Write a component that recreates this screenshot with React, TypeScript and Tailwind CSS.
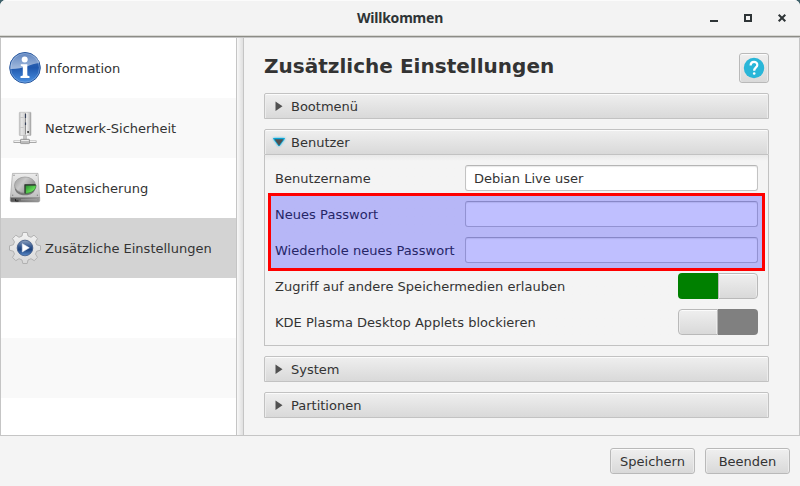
import React from "react";

const raised =
  "border border-[#c2c2c2] bg-gradient-to-b from-[#efefef] to-[#d9d9d9] shadow-[inset_0_1px_0_#fbfbfb,inset_1px_0_0_#ececec,inset_-1px_0_0_#ececec]";

const raisedButton =
  "border border-[#b9b9b9] bg-gradient-to-b from-[#efefef] to-[#d9d9d9] shadow-[inset_0_1px_0_#fbfbfb,inset_1px_0_0_#ececec,inset_-1px_0_0_#ececec]";

function InfoIcon() {
  return (
    <svg width="34" height="34" viewBox="0 0 34 34">
      <defs>
        <linearGradient id="info" x1="0" y1="0" x2="0" y2="1">
          <stop offset="0" stopColor="#3f6bb0" />
          <stop offset="0.5" stopColor="#2058ad" />
          <stop offset="1" stopColor="#4a90e2" />
        </linearGradient>
        <linearGradient id="gloss" x1="0" y1="0" x2="0" y2="1">
          <stop offset="0" stopColor="#fff" stopOpacity="0.2" />
          <stop offset="1" stopColor="#fff" stopOpacity="0.6" />
        </linearGradient>
      </defs>
      <circle cx="17" cy="16.800" r="15.3" fill="url(#info)" stroke="#27569c" />
      <circle cx="17" cy="16.800" r="14.4" fill="none" stroke="#8fb2e2" strokeWidth="0.5" />
      <path d="M2.500 18C2 9 8 2.300 17 2.300S31 8 31.400 12C22 13 17 18 2.500 18Z" fill="url(#gloss)" />
      <circle cx="16.700" cy="8.500" r="3" fill="#fff" />
      <path d="M12.800 13.200H19.300V24.500L21.500 25.200V27H12.500V25.200L14.800 24.500V15.500L12.800 14.800Z" fill="#fff" />
    </svg>
  );
}

function NetworkIcon() {
  return (
    <svg width="34" height="34" viewBox="0 0 34 34">
      <defs>
        <linearGradient id="tower" x1="0" y1="0" x2="1" y2="0">
          <stop offset="0" stopColor="#bdbdbd" />
          <stop offset="0.2" stopColor="#e6e6e6" />
          <stop offset="0.45" stopColor="#d2d2d2" />
          <stop offset="0.6" stopColor="#f0f0f0" />
          <stop offset="0.85" stopColor="#cfcfcf" />
          <stop offset="1" stopColor="#969696" />
        </linearGradient>
      </defs>
      <path d="M5.500 30.700H28.500" stroke="#a8a8a8" strokeWidth="2.600" />
      <path d="M6.200 30.500H27.800" stroke="#f1f1f1" strokeWidth="1.100" />
      <rect x="15.500" y="24" width="3" height="5" fill="#c4c4c4" stroke="#a5a5a5" strokeWidth="0.500" />
      <rect x="11.300" y="1.300" width="11.700" height="23.200" rx="0.500" fill="url(#tower)" stroke="#b5b5b5" strokeWidth="0.600" />
      <path d="M17.500 2V23.500" stroke="#8f8f8f" strokeWidth="1" />
      <path d="M17.500 3V7M17.500 11.500V14" stroke="#354059" strokeWidth="1.200" />
      <path d="M12.500 6.500H15.500M12.500 16.500H15.500" stroke="#b5b5b5" strokeWidth="0.600" />
      <rect x="19.200" y="20" width="1.800" height="2" fill="#4a4a4a" />
      <rect x="12.500" y="28.300" width="9" height="4.300" rx="0.700" fill="#bcbcbc" stroke="#858585" strokeWidth="0.700" />
      <path d="M13.300 29.500H20.700" stroke="#ededed" />
    </svg>
  );
}

function DiskIcon() {
  return (
    <svg width="34" height="34" viewBox="0 0 34 34">
      <defs>
        <linearGradient id="disk" x1="0" y1="0" x2="0" y2="1">
          <stop offset="0" stopColor="#ececec" />
          <stop offset="1" stopColor="#c0c0c0" />
        </linearGradient>
        <linearGradient id="plate" x1="0" y1="0" x2="1" y2="0.600">
          <stop offset="0" stopColor="#999" />
          <stop offset="0.450" stopColor="#c9c9c9" />
          <stop offset="1" stopColor="#858585" />
        </linearGradient>
        <linearGradient id="base" x1="0" y1="0" x2="1" y2="0">
          <stop offset="0" stopColor="#555" />
          <stop offset="1" stopColor="#9b9b9b" />
        </linearGradient>
        <linearGradient id="slice" x1="0" y1="0" x2="1" y2="1">
          <stop offset="0" stopColor="#23852c" />
          <stop offset="0.6" stopColor="#5fd653" />
          <stop offset="1" stopColor="#a4f795" />
        </linearGradient>
      </defs>
      <path d="M4.500 2.400H30L31.600 26.500H2.400Z" fill="url(#disk)" stroke="#a5a5a5" strokeWidth="0.700" />
      <path d="M2.300 26.500H31.700V30L30.700 31H3.300L2.300 30Z" fill="url(#base)" stroke="#909090" strokeWidth="0.600" />
      <path d="M13 28.800H29" stroke="#aaa" strokeWidth="0.800" />
      <path d="M7.500 28V30H10.500" stroke="#222" fill="none" />
      <path d="M6.700 14V16.500C6.700 21.500 11 24.300 17 24.300S27.300 21.500 27.300 16.500V14Z" fill="#777" />
      <ellipse cx="17" cy="14" rx="10.500" ry="8" fill="url(#plate)" stroke="#999" strokeWidth="0.700" />
      <path d="M17 14H28C28.300 18.500 24.500 22 17.500 22.500Z" fill="url(#slice)" stroke="#26662c" strokeWidth="0.600" />
      <path d="M17 22.500V13.800H27.500" fill="none" stroke="#303530" strokeWidth="1.200" />
      <g fill="#858585">
        <circle cx="6" cy="4.200" r="0.700" />
        <circle cx="28.300" cy="4.200" r="0.700" />
        <circle cx="29.400" cy="24.300" r="0.700" />
        <circle cx="4.700" cy="24.300" r="0.700" />
      </g>
    </svg>
  );
}

function GearIcon() {
  return (
    <svg width="34" height="34" viewBox="0 0 34 34">
      <defs>
        <linearGradient id="gear" x1="0" y1="0" x2="0" y2="1">
          <stop offset="0" stopColor="#f2f2f2" />
          <stop offset="1" stopColor="#d8d8d8" />
        </linearGradient>
        <linearGradient id="play" x1="0" y1="0" x2="0" y2="1">
          <stop offset="0" stopColor="#8fa3bf" />
          <stop offset="0.450" stopColor="#2c5089" />
          <stop offset="0.6" stopColor="#1d437e" />
          <stop offset="1" stopColor="#5b8ccb" />
        </linearGradient>
      </defs>
      <path
        d="M14.800 1.500H19.200L20 5L23 6.300L26 4.200L29.500 7.600L27.500 10.900L28.700 13.800L32.500 14.800V19.200L28.700 20.200L27.500 23.100L29.500 26.400L26.200 29.700L23 27.700L20 29L19.200 32.500H14.800L14 29L11 27.700L7.800 29.700L4.500 26.400L6.500 23.100L5.300 20.200L1.500 19.200V14.800L5.300 13.800L6.500 10.900L4.500 7.600L7.900 4.200L11 6.300L14 5Z"
        fill="url(#gear)"
        stroke="#adadad"
        strokeLinejoin="round"
        strokeWidth="0.900"
      />
      <circle cx="17" cy="17" r="9" fill="#e0e0e0" />
      <circle cx="17" cy="17" r="7.800" fill="url(#play)" stroke="#3a5684" strokeWidth="0.800" />
      <path d="M14.300 12.700L21.300 16.800L14.300 21Z" fill="#fff" stroke="#eaf0fa" strokeWidth="0.600" strokeLinejoin="round" />
    </svg>
  );
}

function NavRow({ icon, label, tone }: { icon?: React.ReactNode; label?: string; tone: string }) {
  return (
    <div className={`flex h-[60px] shrink-0 items-center pl-[7px] ${tone}`}>
      {icon}
      <span className="ml-[3px] pt-0.5">{label}</span>
    </div>
  );
}

function PanelHeader({ label, open = false }: { label: string; open?: boolean }) {
  return (
    <div className={`flex h-[26px] items-center rounded-t-[2px] ${raised}`}>
      <svg width="26" height="24" viewBox="0 0 26 24" className="shrink-0 overflow-visible">
        {open ? (
          <>
            <path
              d="M8.500 8.500H19.500L14 16Z"
              fill="#0ba5d6"
              stroke="#0ba5d6"
              strokeWidth="1"
              className="drop-shadow-[0_0_1px_#20b7e6]"
            />
            <path d="M9.500 9.300H18.500L14 15.800Z" fill="#505050" />
          </>
        ) : (
          <path d="M10.500 7.500L17.500 12.300L10.500 17Z" fill="#505050" />
        )}
      </svg>
      <span className="pt-0.5">{label}</span>
    </div>
  );
}

function FieldRow({ label, value }: { label: string; value?: string }) {
  return (
    <div className="flex h-[26px] items-center">
      <span className="w-[190px] shrink-0 pt-0.5 tracking-[0.04px]">{label}</span>
      <div className="flex h-[26px] flex-1 items-center rounded-[3px] border border-[#c3c3c3] border-t-[#b5b5b5] bg-white pl-2 pt-0.5 shadow-[inset_0_1px_1px_#e9e9e9]">
        {value}
      </div>
    </div>
  );
}

function ToggleRow({ label, on }: { label: string; on: boolean }) {
  return (
    <div className="flex h-[26px] items-center justify-between">
      <span className="pt-0.5 tracking-[0.02px]">{label}</span>
      <div className="flex h-[26px] w-20">
        {on ? (
          <>
            <div className="w-10 rounded-l-[4px] bg-[#008000]" />
            <div className={`w-10 rounded-r-[4px] ${raisedButton}`} />
          </>
        ) : (
          <>
            <div className={`w-10 rounded-l-[4px] ${raisedButton}`} />
            <div className="w-10 rounded-r-[4px] bg-[#808080]" />
          </>
        )}
      </div>
    </div>
  );
}

export default function App() {
  return (
    <div className="h-[486px] w-[800px] overflow-hidden bg-[#3f626b]">
      <div className="flex h-full flex-col overflow-hidden rounded-t-[6px] bg-[#f4f4f4] font-['DejaVu_Sans',sans-serif] text-[13px] leading-4 text-[#333333]">
        <header className="flex h-[37px] shrink-0 items-center border-b border-[#8c8c86] bg-[#f3f3f3] shadow-[inset_0_1px_0_#fbfbfb,inset_0_-1px_0_#d8d8d4]">
          <div className="w-[706px] shrink-0 pl-[94px] text-center font-['Noto_Sans','Open_Sans',sans-serif] text-[14px] font-bold tracking-[-0.22px] text-[#2e3436]">
            Willkommen
          </div>
          <svg width="94" height="36" viewBox="0 0 94 36" className="shrink-0">
            <path d="M4 20H12V22H4Z" fill="#2e3436" />
            <path d="M39 15H45V21H39Z" fill="none" stroke="#2e3436" strokeWidth="2" />
            <path d="M72.700 14.700L79.300 21.300M79.300 14.700L72.700 21.300" stroke="#2e3436" strokeWidth="2" />
          </svg>
        </header>

        <div className="flex h-[399px] shrink-0 border border-[#c5c5c5]">
          <nav className="flex w-[236px] shrink-0 flex-col overflow-hidden border-r border-[#c5c5c5] bg-white">
            <NavRow icon={<InfoIcon />} label="Information" tone="bg-white" />
            <NavRow icon={<NetworkIcon />} label="Netzwerk-Sicherheit" tone="bg-[#f9f9f9]" />
            <NavRow icon={<DiskIcon />} label="Datensicherung" tone="bg-white" />
            <NavRow icon={<GearIcon />} label="Zusätzliche Einstellungen" tone="bg-[#d3d3d3]" />
            <NavRow tone="bg-white" />
            <NavRow tone="bg-[#f9f9f9]" />
            <NavRow tone="bg-white" />
          </nav>
          <div className="w-[7px] shrink-0 border-r border-[#c5c5c5] bg-gradient-to-r from-[#f8f8f8] to-[#e0e0e0]" />

          <main className="flex flex-1 flex-col gap-[10px] pl-5 pr-[30px] pt-[15px]">
            <div className="flex h-[30px] items-center justify-between">
              <h1 className="-mt-1 text-[20px] font-bold leading-6 tracking-[0.02px]">Zusätzliche Einstellungen</h1>
              <button className={`flex size-[30px] items-center justify-center rounded-[3px] ${raisedButton}`}>
                <svg width="22" height="22" viewBox="0 0 22 22">
                  <circle cx="11" cy="11" r="10.200" fill="#29b6d8" />
                  <path
                    d="M7.600 8.500C7.600 3.700 14.300 4 14.300 7.900C14.300 10.400 11.200 10.500 11.200 13.800"
                    fill="none"
                    stroke="#fff"
                    strokeWidth="2.200"
                  />
                  <circle cx="11.200" cy="16.500" r="1.300" fill="#fff" />
                </svg>
              </button>
            </div>

            <PanelHeader label="Bootmenü" />

            <section>
              <PanelHeader label="Benutzer" open />
              <div className="relative flex h-[191px] flex-col gap-[10px] border border-t-0 border-[#c2c2c2] bg-gradient-to-b from-[#e9e9e9] to-[#f4f4f4] to-[6px] px-[10px] pt-[10px]">
                <FieldRow label="Benutzername" value="Debian Live user" />
                <FieldRow label="Neues Passwort" />
                <FieldRow label="Wiederhole neues Passwort" />
                <ToggleRow label="Zugriff auf andere Speichermedien erlauben" on />
                <ToggleRow label="KDE Plasma Desktop Applets blockieren" on={false} />
                <div className="absolute left-[3px] top-[38px] h-[78px] w-[497px] border-[3px] border-[#ff0000] bg-[#0000ff]/25" />
              </div>
            </section>

            <PanelHeader label="System" />
            <PanelHeader label="Partitionen" />
          </main>
        </div>

        <footer className="flex justify-end gap-[10px] pr-[10px] pt-3">
          <button className={`h-[26px] w-[85px] rounded-[3px] pt-0.5 ${raisedButton}`}>Speichern</button>
          <button className={`h-[26px] w-[85px] rounded-[3px] pt-0.5 ${raisedButton}`}>Beenden</button>
        </footer>
      </div>
    </div>
  );
}
